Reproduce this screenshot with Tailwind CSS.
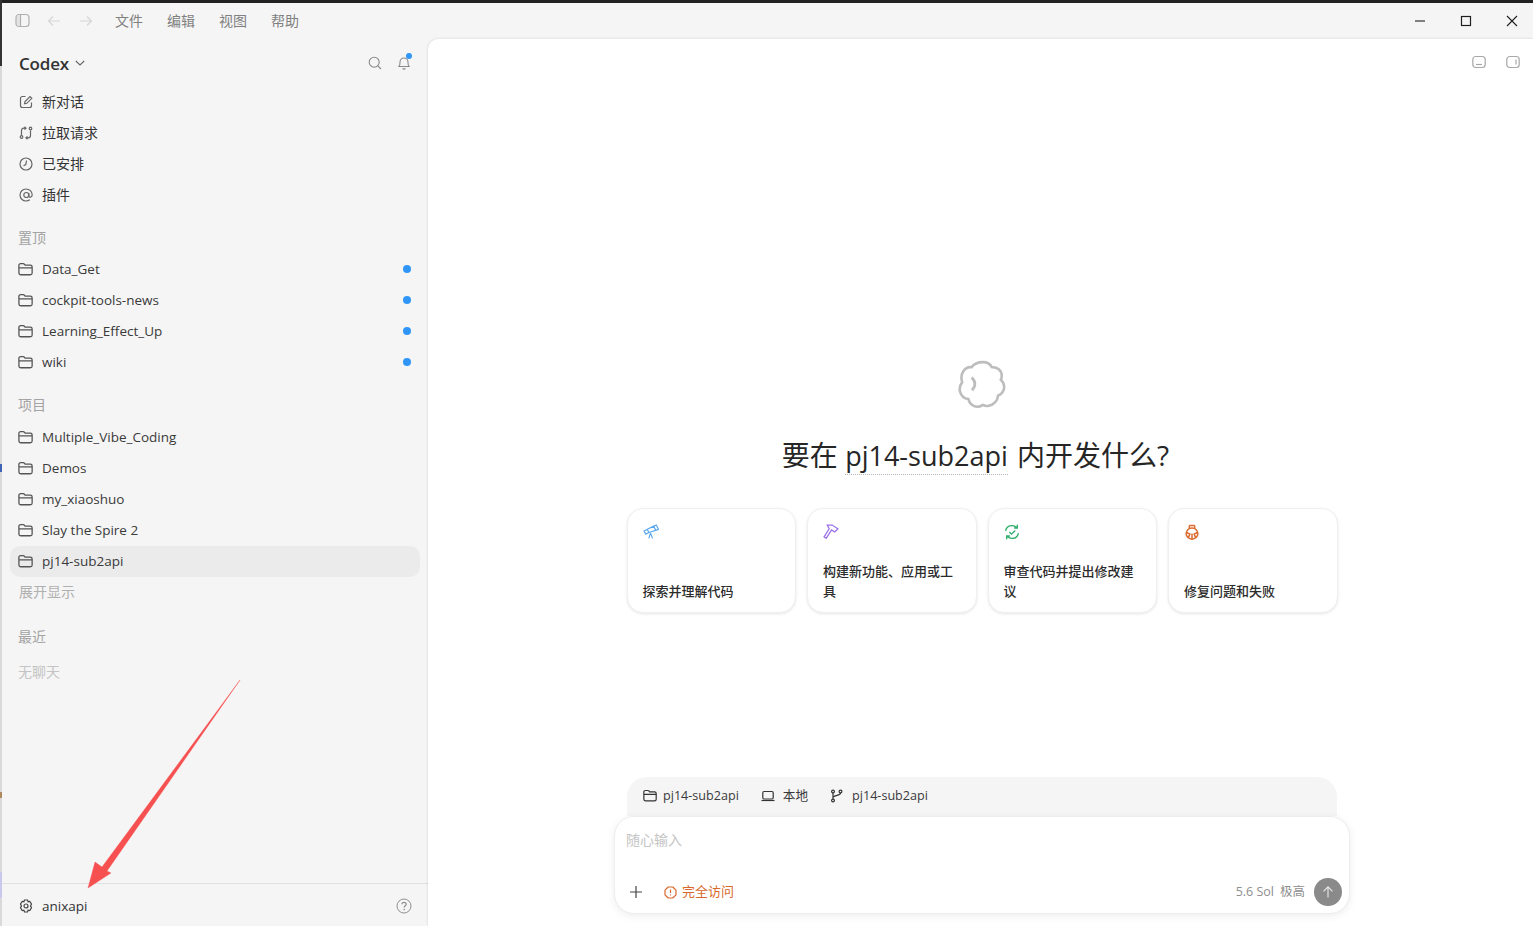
<!DOCTYPE html>
<html lang="zh-CN">
<head>
    <meta charset="UTF-8">
    <title>Codex</title>
    <script src="https://cdn.jsdelivr.net/npm/@tailwindcss/browser@4"></script>
</head>
<body class="h-[926px] w-[1533px] overflow-hidden bg-[#222222] font-['Open_Sans','Noto_Sans_CJK_SC',sans-serif] text-[#2b2b2b]">
    <svg class="hidden">
        <symbol id="folder" viewBox="0 0 14 14" fill="none" stroke="currentColor" stroke-width="1.2">
            <path d="M.8 3.200c0-1 .7-1.700 1.700-1.700h2.300c.6 0 1 .3 1.300.7l.5.7h4.900c1 0 1.700.7 1.700 1.700v5.600c0 1-.7 1.700-1.700 1.700h-8.900c-1 0-1.700-.7-1.700-1.700z M.8 5.400h12.400"/>
        </symbol>
    </svg>

    <div class="flex h-[926px]">
        <!-- sliver of the desktop behind the window -->
        <div class="flex w-[2px] shrink-0 flex-col bg-[#d9d9d9]">
            <div class="h-[66px] bg-[#333333]"></div>
            <div class="mt-[398px] h-[8px] bg-[#3f63b5]"></div>
            <div class="mt-[320px] h-[6px] bg-[#b08a60]"></div>
            <div class="mt-[74px] h-[26px] bg-[#c9c9ee]"></div>
        </div>

        <div class="relative mt-[3px] flex h-[923px] w-[1531px] flex-col bg-[#f5f5f5]">
            <!-- title bar -->
            <header class="flex h-[35px] shrink-0 items-center text-[14px] text-[#808080]">
                <svg class="ml-[13px] size-[15px] text-[#b0b0b0]" viewBox="0 0 15 15" fill="none" stroke="currentColor" stroke-width="1.200"><rect x="1" y="1.500" width="13" height="12" rx="3"/><path d="M5.500 1.500v12"/><path d="M1.500 4v7l3.500 2V2z" fill="currentColor" fill-opacity=".25" stroke="none"/></svg>
                <svg class="ml-[17px] size-[14px] text-[#d6d6d6]" viewBox="0 0 14 14" fill="none" stroke="currentColor" stroke-width="1.200"><path d="M13 7H1.500M6 2.500 1.500 7 6 11.500"/></svg>
                <svg class="ml-[18px] size-[14px] text-[#d6d6d6]" viewBox="0 0 14 14" fill="none" stroke="currentColor" stroke-width="1.200"><path d="M1 7h11.500M8 2.500 12.500 7 8 11.500"/></svg>
                <nav class="ml-[22px] flex gap-[24px]">
                    <span>文件</span><span>编辑</span><span>视图</span><span>帮助</span>
                </nav>
                <div class="ml-auto flex items-center text-[#1f1f1f]">
                    <svg class="mr-[34px] size-[12px]" viewBox="0 0 12 12" stroke="currentColor" stroke-width="1.100"><path d="M1 6h10"/></svg>
                    <svg class="mr-[34px] size-[12px]" viewBox="0 0 12 12" fill="none" stroke="currentColor" stroke-width="1.200"><rect x="1.500" y="1.500" width="9" height="9"/></svg>
                    <svg class="mr-[15px] size-[12px]" viewBox="0 0 12 12" stroke="currentColor" stroke-width="1.100"><path d="M1 1l10 10M11 1 1 11"/></svg>
                </div>
            </header>

            <div class="flex min-h-0 flex-1">
                <!-- sidebar -->
                <aside class="flex w-[426px] shrink-0 flex-col">
                    <div class="mt-[3px] flex h-[44px] items-center pr-[17px] pl-[17px]">
                        <span class="text-[17px] leading-none font-semibold tracking-[-0.2px] text-[#333333]">Codex</span>
                        <svg class="ml-[6px] size-[10px] text-[#666666]" viewBox="0 0 10 10" fill="none" stroke="currentColor" stroke-width="1.100"><path d="M.8 3 5 7l4.200-4"/></svg>
                        <svg class="ml-auto size-[14px] text-[#8a8a8a]" viewBox="0 0 14 14" fill="none" stroke="currentColor" stroke-width="1.100"><circle cx="6.200" cy="6.200" r="5"/><path d="m10 10 3 3"/></svg>
                        <div class="relative ml-[15px] size-[14px] text-[#8a8a8a]">
                            <svg class="size-[14px]" viewBox="0 0 14 14" fill="none" stroke="currentColor" stroke-width="1.100"><path d="M2 10.500c1-1 1-2 1-4.200C3 3.800 4.800 2 7 2s4 1.800 4 4.300c0 2.200 0 3.200 1 4.200zM5.500 12.500c1 .8 2 .8 3 0"/></svg>
                            <span class="absolute -top-[3px] -right-[1px] size-[6px] rounded-full bg-[#2f96f7]"></span>
                        </div>
                    </div>

                    <ul class="mt-[1px] text-[14px] text-[#333333]">
                        <li class="flex h-[31px] items-center gap-[9px] pl-[17px]">
                            <svg class="size-[14px] text-[#666666]" viewBox="0 0 14 14" fill="none" stroke="currentColor" stroke-width="1.200"><path d="M6.500 1.500H3.500c-1.200 0-2 .8-2 2v7c0 1.200.8 2 2 2h7c1.200 0 2-.8 2-2V7.500"/><path d="M5.500 8.800 6 6.500l5-5 1.800 1.800-5 5z"/></svg>
                            <span>新对话</span>
                        </li>
                        <li class="flex h-[31px] items-center gap-[9px] pl-[17px]">
                            <svg class="size-[14px] text-[#666666]" viewBox="0 0 14 14" fill="none" stroke="currentColor" stroke-width="1.200"><circle cx="2.500" cy="11" r="1.300"/><circle cx="11.500" cy="2.500" r="1.300"/><path d="M2.500 9.500V4.500c0-1.500 1-2.300 2.300-2.300H7M5.500.8 7 2.200 5.500 3.600M11.500 4.500v5c0 1.500-1 2.300-2.300 2.300H7M8.500 10.400 7 11.800l1.500 1.400"/></svg>
                            <span>拉取请求</span>
                        </li>
                        <li class="flex h-[31px] items-center gap-[9px] pl-[17px]">
                            <svg class="size-[14px] text-[#666666]" viewBox="0 0 14 14" fill="none" stroke="currentColor" stroke-width="1.200"><circle cx="7" cy="7" r="6"/><path d="M7.500 3.500 6.800 7.500 4.500 8.800"/></svg>
                            <span>已安排</span>
                        </li>
                        <li class="flex h-[31px] items-center gap-[9px] pl-[17px]">
                            <svg class="size-[14px] text-[#666666]" viewBox="0 0 14 14" fill="none" stroke="currentColor" stroke-width="1.200"><circle cx="7.300" cy="7" r="2.500"/><path d="M9.800 5v3c0 1.800 3.400 1.500 3.400-1.200C13.200 3.500 10.500 1 7 1 3.700 1 1 3.700 1 7s2.700 6 6 6c1.500 0 2.700-.4 3.800-1.200"/></svg>
                            <span>插件</span>
                        </li>
                    </ul>

                    <div class="mt-[14px] h-[28px] pl-[16px] text-[14px] leading-[28px] text-[#a3a3a3]">置顶</div>
                    <ul class="mt-[2px] text-[13.500px] text-[#3a3a3a]">
                        <li class="flex h-[31px] items-center gap-[9px] pr-[17px] pl-[16px]"><svg class="size-[15px] text-[#555555]"><use href="#folder"/></svg><span class="flex-1">Data_Get</span><span class="size-[8px] -translate-y-px rounded-full bg-[#2f96f7]"></span></li>
                        <li class="flex h-[31px] items-center gap-[9px] pr-[17px] pl-[16px]"><svg class="size-[15px] text-[#555555]"><use href="#folder"/></svg><span class="flex-1">cockpit-tools-news</span><span class="size-[8px] -translate-y-px rounded-full bg-[#2f96f7]"></span></li>
                        <li class="flex h-[31px] items-center gap-[9px] pr-[17px] pl-[16px]"><svg class="size-[15px] text-[#555555]"><use href="#folder"/></svg><span class="flex-1">Learning_Effect_Up</span><span class="size-[8px] -translate-y-px rounded-full bg-[#2f96f7]"></span></li>
                        <li class="flex h-[31px] items-center gap-[9px] pr-[17px] pl-[16px]"><svg class="size-[15px] text-[#555555]"><use href="#folder"/></svg><span class="flex-1">wiki</span><span class="size-[8px] -translate-y-px rounded-full bg-[#2f96f7]"></span></li>
                    </ul>

                    <div class="mt-[13px] h-[28px] pl-[16px] text-[14px] leading-[28px] text-[#a3a3a3]">项目</div>
                    <ul class="mt-[3px] text-[13.500px] text-[#3a3a3a]">
                        <li class="flex h-[31px] items-center gap-[9px] pl-[16px]"><svg class="size-[15px] text-[#555555]"><use href="#folder"/></svg><span>Multiple_Vibe_Coding</span></li>
                        <li class="flex h-[31px] items-center gap-[9px] pl-[16px]"><svg class="size-[15px] text-[#555555]"><use href="#folder"/></svg><span>Demos</span></li>
                        <li class="flex h-[31px] items-center gap-[9px] pl-[16px]"><svg class="size-[15px] text-[#555555]"><use href="#folder"/></svg><span>my_xiaoshuo</span></li>
                        <li class="flex h-[31px] items-center gap-[9px] pl-[16px]"><svg class="size-[15px] text-[#555555]"><use href="#folder"/></svg><span>Slay the Spire 2</span></li>
                        <li class="mx-[8px] flex h-[31px] items-center gap-[9px] rounded-[10px] bg-[#ebebeb] pl-[8px]"><svg class="size-[15px] text-[#555555]"><use href="#folder"/></svg><span>pj14-sub2api</span></li>
                    </ul>
                    <div class="mt-[1px] h-[28px] pl-[17px] text-[14px] leading-[28px] text-[#b0b0b0]">展开显示</div>

                    <div class="mt-[17px] h-[28px] pl-[16px] text-[14px] leading-[28px] text-[#a3a3a3]">最近</div>
                    <div class="mt-[7px] h-[28px] pl-[16px] text-[14px] leading-[28px] text-[#c4c4c4]">无聊天</div>

                    <footer class="mt-auto flex h-[43px] items-center border-t border-[#e0e0e0] pt-[2px] pr-[16px] pl-[17px] text-[13.500px] text-[#333333]">
                        <svg class="size-[14px] text-[#444444]" viewBox="0 0 14 14" fill="none" stroke="currentColor" stroke-width="1.200"><path d="M5.500 1h3l.6 1.700 1.700-.3L12.500 5l-1 1.900 1 1.900-1.700 2.700-1.700-.4L8.500 13h-3l-.6-1.900-1.700.4L1.500 8.800l1-1.900-1-1.900 1.700-2.600 1.700.3z"/><circle cx="7" cy="7" r="2"/></svg>
                        <span class="ml-[9px] flex-1">anixapi</span>
                        <svg class="size-[16px] text-[#8f8f8f]" viewBox="0 0 16 16" fill="none" stroke="currentColor" stroke-width="1"><circle cx="8" cy="8" r="7"/><path d="M6 6.300c0-2.600 4.200-2.600 4.200-.1 0 1.500-2 1.600-2 3.200" stroke-width="1.200"/><circle cx="8.200" cy="11.500" r=".4"/></svg>
                    </footer>
                </aside>

                <!-- main panel -->
                <main class="relative mt-[1px] flex flex-1 flex-col items-center rounded-tl-[10px] bg-white pl-[3px] shadow-[0_0_3px_rgba(0,0,0,0.14)]">
                    <div class="absolute top-[16px] right-[13px] flex gap-[20px] text-[#a8a8a8]">
                        <svg class="size-[14px]" viewBox="0 0 14 14" fill="none" stroke="currentColor" stroke-width="1.200"><rect x=".8" y="1.500" width="12.400" height="11" rx="3"/><path d="M4 9.500h6"/></svg>
                        <svg class="size-[14px]" viewBox="0 0 14 14" fill="none" stroke="currentColor" stroke-width="1.200"><rect x=".8" y="1.500" width="12.400" height="11" rx="3"/><path d="M10 4.500v5"/></svg>
                    </div>

                    <svg class="mt-[321px] ml-[1px] size-[50px] text-[#bdbdbd]" viewBox="0 0 48 48" fill="none" stroke="currentColor" stroke-width="2.500" stroke-linejoin="round">
                        <path d="M24 2c4 0 7 2 8.500 5 5-.5 9.500 3 9.500 8 0 1.500-.3 3-1 4 3.500 3 4 7.500 2.500 10.500-1.200 2.500-3 4-5 4.500-.5 5-4 9-9 10-2 .5-4 0-5.500-1-3 2-6 2.500-9 1-3-1.500-4.500-4-5-6.500-4-.5-7-3-8-7-1-3.500 0-6.500 2-9C3 18 3 14 5 11c2-3 5-4.500 8-4 2-3 6-5 11-5z"/>
                        <path d="M13 17c2.500 2 3.500 4.500 3 7.500-.3 1.500-1.200 3-2.500 4.500" stroke-width="2.800"/>
                    </svg>

                    <h1 class="mt-[26px] -ml-[13px] text-[28px] leading-[38px] font-normal text-[#262626]">要在 <span class="mr-[2px] border-b border-dotted border-[#b5b5b5] text-[27px]">pj14-sub2api</span> 内开发什么?</h1>

                    <div class="mt-[33px] grid w-[711px] grid-cols-4 gap-[11px] text-[13px] leading-[20px] font-medium text-[#2b2b2b]">
                        <div class="flex h-[105px] flex-col rounded-[16px] border border-[#f0f0f0] bg-white px-[15px] pt-[15px] pb-[11px] shadow-[0_1px_3px_rgba(0,0,0,0.1)]">
                            <svg class="size-[16px] text-[#5aa9f0]" viewBox="0 0 15 15" fill="none" stroke="currentColor" stroke-width="1.100"><path d="M1 6.500 4 5l1.500 3L2.500 9.500zM4 5l6-3 2 4-6.500 2M10 2l2.500-1 2 4-2.500 1M7 8.500l-1.500 5M7 8.500l2 5"/></svg>
                            <span class="mt-auto">探索并理解代码</span>
                        </div>
                        <div class="flex h-[105px] flex-col rounded-[16px] border border-[#f0f0f0] bg-white px-[15px] pt-[15px] pb-[11px] shadow-[0_1px_3px_rgba(0,0,0,0.1)]">
                            <svg class="size-[16px] text-[#9a72e8]" viewBox="0 0 15 15" fill="none" stroke="currentColor" stroke-width="1.200"><path d="M4 1h4.500l5.500 3.500-3 3L8 5.500 3 13.500l-2-1.500L5.800 4.500z"/></svg>
                            <span class="mt-auto">构建新功能、应用或工具</span>
                        </div>
                        <div class="flex h-[105px] flex-col rounded-[16px] border border-[#f0f0f0] bg-white px-[15px] pt-[15px] pb-[11px] shadow-[0_1px_3px_rgba(0,0,0,0.1)]">
                            <svg class="size-[16px] text-[#2fae6b]" viewBox="0 0 15 15" fill="none" stroke="currentColor" stroke-width="1.300"><path d="M1.500 6.500C2 3.500 4.500 1.500 7.500 1.500c1.800 0 3.300.7 4.500 2M13.500 8.500c-.5 3-3 5-6 5-1.800 0-3.300-.7-4.500-2M12.500.8v3h-3M2.500 14.200v-3h3M5 7.500l2 2 3.500-3.500"/></svg>
                            <span class="mt-auto">审查代码并提出修改建议</span>
                        </div>
                        <div class="flex h-[105px] flex-col rounded-[16px] border border-[#f0f0f0] bg-white px-[15px] pt-[15px] pb-[11px] shadow-[0_1px_3px_rgba(0,0,0,0.1)]">
                            <svg class="size-[16px] text-[#dd6a2c]" viewBox="0 0 15 15" fill="none" stroke="currentColor" stroke-width="1.400"><ellipse cx="7.500" cy="9" rx="5.500" ry="5.200"/><path d="M5 4.500V1.500M10 4.500V1.500M5 1.500h5M7.500 9v5M2.500 8l3 1.500L4 13M12.500 8l-3 1.500L11 13"/></svg>
                            <span class="mt-auto">修复问题和失败</span>
                        </div>
                    </div>

                    <!-- composer -->
                    <div class="mt-auto mb-[12px] flex w-[736px] flex-col items-center">
                        <div class="flex h-[39px] w-[710px] items-center gap-[22px] rounded-t-[20px] bg-[#f5f5f5] pb-[1px] pl-[16px] text-[12.600px] text-[#3a3a3a]">
                            <span class="flex items-center gap-[6px]"><svg class="size-[14px] text-[#333333]"><use href="#folder"/></svg>pj14-sub2api</span>
                            <span class="flex items-center gap-[8px]"><svg class="size-[14px] text-[#333333]" viewBox="0 0 14 14" fill="none" stroke="currentColor" stroke-width="1.200"><rect x="1.800" y="2.500" width="10.400" height="7.500" rx="1.200"/><path d="M.5 11.500h13"/></svg>本地</span>
                            <span class="flex items-center gap-[8px]"><svg class="size-[14px] text-[#333333]" viewBox="0 0 14 14" fill="none" stroke="currentColor" stroke-width="1.200"><circle cx="3" cy="2.500" r="1.400"/><circle cx="3" cy="11.500" r="1.400"/><circle cx="10.500" cy="2.500" r="1.400"/><path d="M3 4v6M10.500 4c0 2.500-4.500 2-7.500 4"/></svg>pj14-sub2api</span>
                        </div>
                        <div class="flex h-[98px] w-full flex-col rounded-[20px] border border-[#ededed] bg-white px-[11px] shadow-[0_2px_8px_rgba(0,0,0,0.07)]">
                            <div class="mt-[13px] text-[14px] leading-[20px] text-[#c4c4c4]">随心输入</div>
                            <div class="mt-auto mb-[7px] flex items-center">
                                <svg class="ml-[4px] size-[12px] text-[#444444]" viewBox="0 0 12 12" stroke="currentColor" stroke-width="1.200"><path d="M6 0v12M0 6h12"/></svg>
                                <span class="ml-[22px] flex items-center gap-[5px] text-[13px] text-[#d9682c]">
                                    <svg class="size-[13px]" viewBox="0 0 13 13" fill="none" stroke="currentColor" stroke-width="1.200"><path d="M4.200 1h4.600L12 4.200v4.600L8.800 12H4.200L1 8.800V4.200z" stroke-linejoin="round"/><path d="M6.500 3.500v3.500M6.500 8.500v1"/></svg>完全访问
                                </span>
                                <span class="ml-auto text-[12.500px] text-[#8e8e8e]">5.6 Sol</span>
                                <span class="ml-[6px] text-[12.500px] text-[#8e8e8e]">极高</span>
                                <span class="-mr-[4px] ml-[9px] flex size-[28px] items-center justify-center rounded-full bg-[#8a8a8a]">
                                    <svg class="size-[12px] text-white/80" viewBox="0 0 12 12" fill="none" stroke="currentColor" stroke-width="1.100"><path d="M6 11.500V.8M1.500 5.300 6 .8l4.500 4.500"/></svg>
                                </span>
                            </div>
                        </div>
                    </div>
                </main>
            </div>

            <!-- annotation arrow drawn over the screenshot -->
            <svg class="pointer-events-none absolute -top-[3px] -left-[2px] h-[926px] w-[430px]" viewBox="0 0 430 926">
                <path d="M240 680 107 871 111 873 88 888 95 862 102 867z" fill="#f75050" stroke="#f75050" stroke-width=".4" stroke-linejoin="round"/>
            </svg>
        </div>
    </div>
</body>
</html>
